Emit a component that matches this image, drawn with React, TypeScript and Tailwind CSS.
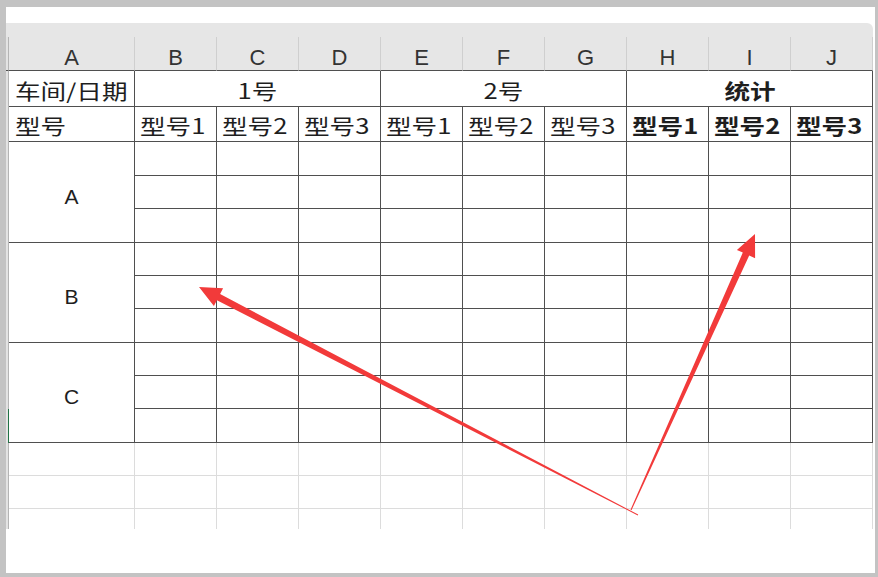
import React from 'react';

const letters = ['A', 'B', 'C', 'D', 'E', 'F', 'G', 'H', 'I', 'J'];
const groups = ['A', 'B', 'C'];
const dataRows = [34, 33, 34, 33, 33, 34, 33, 33, 34];

const cjk = "font-['Noto_Sans_CJK_SC','Noto_Sans',sans-serif]";
const line = 'border-[#4f4f4f]';
const strip = 'bg-[#e3e3e3] border-r border-[#b4b4b4]';

// text in the sheet is a bit wider than the font, like the screenshot
const Txt = ({ children, bold, left }: { children: React.ReactNode; bold?: boolean; left?: boolean }) => (
    <span
        className={`inline-block scale-x-[1.22] text-[21px] leading-none text-[#1e1e1e] ${cjk} ${bold ? 'font-bold' : 'font-normal'} ${left ? 'origin-left' : 'origin-center'}`}
    >
        {children}
    </span>
);

const Arrows = () => (
    <svg className="pointer-events-none absolute inset-0" width={878} height={577} viewBox="0 0 878 577">
        <polygon
            fill="#f23a3a"
            points="638.2,514.6 220.1,294.0 223.1,288.3 199,287 213.9,306.0 216.9,300.2 637.8,515.4"
        />
        <polygon
            fill="#f23a3a"
            points="631.5,510.2 749.2,255.5 755.1,258.2 755,234 736.9,250.0 742.8,252.6 630.5,509.8"
        />
    </svg>
);

export default function App() {
    return (
        <div className="relative h-[577px] w-[878px] bg-[#c3c3c3] pb-[4px] pl-[6px] pr-[3px] pt-[7px]">
            <div className="h-full w-full bg-white pt-[16px]">
                <div className="grid grid-cols-[3px_126px_repeat(9,82px)] grid-rows-[14px_34px_36px_35px_34px_33px_34px_33px_33px_34px_33px_33px_34px_33px_33px_20px]">
                    {/* header band */}
                    <div className="col-span-11 rounded-tr-[6px] bg-[#e6e6e6]" />
                    <div className={`${strip} border-b border-b-[#4f4f4f]`} />
                    {letters.map((l) => (
                        <div
                            key={l}
                            className="flex items-center justify-center border-b border-r border-b-[#4f4f4f] border-r-[#cfcfcf] bg-[#e6e6e6] pt-[7px] font-['Liberation_Sans',sans-serif] text-[22px] text-[#333]"
                        >
                            {l}
                        </div>
                    ))}

                    {/* row 1 */}
                    <div className={strip} />
                    <div className={`flex items-end border-b border-r ${line} pb-[5px] pl-[6px]`}>
                        <Txt left>车间/日期</Txt>
                    </div>
                    <div className={`col-span-3 flex items-end justify-center border-b border-r ${line} pb-[5px]`}>
                        <Txt>1号</Txt>
                    </div>
                    <div className={`col-span-3 flex items-end justify-center border-b border-r ${line} pb-[5px]`}>
                        <Txt>2号</Txt>
                    </div>
                    <div className={`col-span-3 flex items-end justify-center border-b border-r ${line} pb-[5px]`}>
                        <Txt bold>统计</Txt>
                    </div>

                    {/* row 2 */}
                    <div className={strip} />
                    <div className={`flex items-end border-b border-r ${line} pb-[5px] pl-[6px]`}>
                        <Txt left>型号</Txt>
                    </div>
                    {[1, 2, 3, 1, 2, 3, 1, 2, 3].map((n, i) => (
                        <div key={i} className={`flex items-end border-b border-r ${line} pb-[5px] pl-[5px]`}>
                            <Txt left bold={i > 5}>型号{n}</Txt>
                        </div>
                    ))}

                    {/* data rows, A column merged by three */}
                    {dataRows.map((h, r) => (
                        <React.Fragment key={r}>
                            <div className={`${strip} ${r === 8 ? 'border-r-[#217346]' : ''}`} />
                            {r % 3 === 0 && (
                                <div
                                    className={`row-span-3 flex items-center justify-center border-b border-r ${line} pt-[9px] font-['Liberation_Sans',sans-serif] text-[21px] text-[#1e1e1e]`}
                                >
                                    {groups[r / 3]}
                                </div>
                            )}
                            {letters.slice(1).map((l) => (
                                <div key={l} className={`border-b border-r ${line}`} />
                            ))}
                        </React.Fragment>
                    ))}

                    {/* empty rows under the table */}
                    {[0, 1, 2].map((r) => (
                        <React.Fragment key={r}>
                            <div className={strip} />
                            {letters.map((l) => (
                                <div
                                    key={l}
                                    className={`border-r border-[#dcdcdc] ${r < 2 ? 'border-b' : ''}`}
                                />
                            ))}
                        </React.Fragment>
                    ))}
                </div>
            </div>
            <Arrows />
        </div>
    );
}
